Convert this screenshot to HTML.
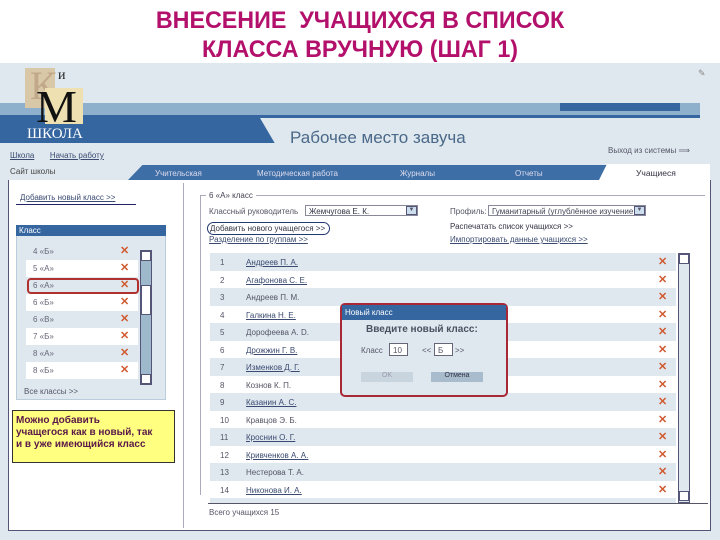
<!DOCTYPE html>
<html><head><meta charset="utf-8"><style>
*{margin:0;padding:0;box-sizing:border-box}
body{width:720px;height:540px;background:#fff;position:relative;overflow:hidden;font-family:"Liberation Sans",sans-serif;font-size:8px;color:#556}
.a{position:absolute}
.t{position:absolute;left:0;width:720px;text-align:center;font-family:"Liberation Sans Narrow","Liberation Sans",sans-serif;font-weight:bold;font-size:24px;color:#b3106c;transform:scaleX(0.97)}
u{color:#3a4a70}
.row{position:absolute;left:210px;width:466px;height:17.5px;font-size:8px;color:#556}
.row span{position:absolute;top:5px}
.x{color:#d05a30;font-size:11px;font-weight:bold}
.cr{position:absolute;left:26px;width:112px;height:17px;line-height:17px;color:#667;padding-left:7px}
.cr b{position:absolute;left:94px;top:0;color:#d05a30;font-size:11px}
</style></head><body>
<div class="t" style="top:7px">ВНЕСЕНИЕ&nbsp; УЧАЩИХСЯ В СПИСОК</div>
<div class="t" style="top:36px">КЛАССА ВРУЧНУЮ (ШАГ 1)</div>

<div class="a" style="left:0;top:63px;width:720px;height:477px;background:#dfe8ef"></div>
<div class="a" style="left:0;top:103px;width:700px;height:12px;background:#8fb0cc"></div>
<div class="a" style="left:0;top:115px;width:700px;height:28px;background:#3566a0"></div>
<div class="a" style="left:260px;top:118px;width:440px;height:30px;background:#dfe8ef;clip-path:polygon(0 0,100% 0,100% 100%,4% 100%)"></div>
<div class="a" style="left:560px;top:103px;width:120px;height:8px;background:#3566a0"></div>
<div class="a" style="left:25px;top:68px;width:30px;height:40px;background:#d8c8a8"></div>
<div class="a" style="left:30px;top:62px;font-family:'Liberation Serif',serif;font-size:40px;color:#c0a888">К</div>
<div class="a" style="left:58px;top:68px;font-family:'Liberation Serif',serif;font-size:14px;color:#222">и</div>
<div class="a" style="left:45px;top:88px;width:38px;height:36px;background:#eee0b0"></div>
<div class="a" style="left:36px;top:80px;font-family:'Liberation Serif',serif;font-size:46px;color:#111">М</div>
<div class="a" style="left:27px;top:126px;font-family:'Liberation Serif',serif;font-size:15px;color:#fff">ШКОЛА</div>
<div class="a" style="left:290px;top:128px;font-size:17px;color:#4a6888">Рабочее место завуча</div>
<div class="a" style="left:608px;top:146px;font-size:8px;color:#556">Выход из системы ⟹</div>
<div class="a" style="left:698px;top:68px;font-size:9px;color:#888">✎</div>
<div class="a" style="left:10px;top:151px"><u>Школа</u>&nbsp;&nbsp;&nbsp;&nbsp;&nbsp;&nbsp;&nbsp;<u>Начать работу</u></div>
<div class="a" style="left:10px;top:167px;color:#444">Сайт школы</div>
<div class="a" style="left:128px;top:165px;width:480px;height:15px;background:#3e6ea6;clip-path:polygon(3% 0,100% 0,100% 100%,0 100%)"></div>
<div class="a" style="left:155px;top:169px;color:#dde;width:450px"><span style="position:absolute;left:0">Учительская</span><span style="position:absolute;left:102px">Методическая работа</span><span style="position:absolute;left:245px">Журналы</span><span style="position:absolute;left:360px">Отчеты</span></div>
<div class="a" style="left:598px;top:164px;width:112px;height:18px;background:#fff;clip-path:polygon(8% 0,100% 0,100% 100%,0 100%)"></div>
<div class="a" style="left:636px;top:168px;font-size:8.5px;color:#334">Учащиеся</div>

<div class="a" style="left:8px;top:180px;width:703px;height:351px;background:#fff;border:1px solid #557;border-top:none"></div>
<div class="a" style="left:183px;top:183px;width:1px;height:345px;background:#aab"></div>
<div class="a" style="left:20px;top:193px"><u>Добавить новый класс &gt;&gt;</u></div>
<div class="a" style="left:16px;top:204px;width:120px;height:1px;background:#226"></div>
<div class="a" style="left:16px;top:225px;width:150px;height:175px;background:#dfe8ef;border:1px solid #bcd"></div>
<div class="a" style="left:16px;top:225px;width:150px;height:11px;background:#3566a0;color:#fff;padding:1px 3px">Класс</div>
<div class="cr" style="top:243px">4 «Б»<b>✕</b></div>
<div class="cr" style="top:260px;background:#fff">5 «А»<b>✕</b></div>
<div class="cr" style="top:277px">6 «А»<b>✕</b></div>
<div class="cr" style="top:294px;background:#fff">6 «Б»<b>✕</b></div>
<div class="cr" style="top:311px">6 «В»<b>✕</b></div>
<div class="cr" style="top:328px;background:#fff">7 «Б»<b>✕</b></div>
<div class="cr" style="top:345px">8 «А»<b>✕</b></div>
<div class="cr" style="top:362px;background:#fff">8 «Б»<b>✕</b></div>
<div class="a" style="left:27px;top:278px;width:112px;height:16px;border:2px solid #b03030;border-radius:4px"></div>
<div class="a" style="left:140px;top:250px;width:12px;height:135px;background:#9eb8cc;border:1px solid #557"></div>
<div class="a" style="left:141px;top:251px;width:10px;height:10px;background:#fff;border:1px solid #557"></div>
<div class="a" style="left:141px;top:285px;width:10px;height:30px;background:#fff;border:1px solid #557"></div>
<div class="a" style="left:141px;top:374px;width:10px;height:10px;background:#fff;border:1px solid #557"></div>
<div class="a" style="left:24px;top:387px;color:#556">Все классы &gt;&gt;</div>
<div class="a" style="left:12px;top:410px;width:163px;height:53px;background:#ffff80;border:1px solid #333;padding:4px 3px;font-weight:bold;font-size:10px;line-height:12px;color:#5a1848;white-space:nowrap">Можно добавить<br>учащегося как в новый, так<br>и в уже имеющийся класс</div>

<div class="a" style="left:200px;top:195px;width:505px;height:300px;border-top:1px solid #aab;border-left:1px solid #aab"></div>
<div class="a" style="left:206px;top:191px;background:#fff;padding:0 3px;color:#445">6 «А» класс</div>
<div class="a" style="left:209px;top:207px">Классный руководитель</div>
<div class="a" style="left:305px;top:205px;width:113px;height:11px;border:1px solid #889;padding:1px 3px;color:#334">Жемчугова Е. К.</div>
<div class="a" style="left:406px;top:206px;width:11px;height:9px;background:#cde;border:1px solid #557;font-size:6px;text-align:center">▼</div>
<div class="a" style="left:450px;top:207px">Профиль:</div>
<div class="a" style="left:488px;top:205px;width:158px;height:11px;border:1px solid #889;padding:1px 3px;color:#445;overflow:hidden;white-space:nowrap">Гуманитарный (углублённое изучение</div>
<div class="a" style="left:634px;top:206px;width:11px;height:9px;background:#cde;border:1px solid #557;font-size:6px;text-align:center">▼</div>
<div class="a" style="left:207px;top:222px;width:123px;height:13px;border:1.5px solid #223a70;border-radius:7px"></div>
<div class="a" style="left:210px;top:224px;color:#334">Добавить нового учащегося &gt;&gt;</div>
<div class="a" style="left:209px;top:235px"><u>Разделение по группам &gt;&gt;</u></div>
<div class="a" style="left:450px;top:222px;color:#334">Распечатать список учащихся &gt;&gt;</div>
<div class="a" style="left:450px;top:235px"><u>Импортировать данные учащихся &gt;&gt;</u></div>

<div class="row" style="top:253px;background:#dfe8ef"><span style="left:10px">1</span><span style="left:36px"><u>Андреев П. А.</u></span><span class="x" style="left:448px;top:2px">✕</span></div>
<div class="row" style="top:270.5px"><span style="left:10px">2</span><span style="left:36px"><u>Агафонова С. Е.</u></span><span class="x" style="left:448px;top:2px">✕</span></div>
<div class="row" style="top:288px;background:#dfe8ef"><span style="left:10px">3</span><span style="left:36px">Андреев П. М.</span><span class="x" style="left:448px;top:2px">✕</span></div>
<div class="row" style="top:305.5px"><span style="left:10px">4</span><span style="left:36px"><u>Галкина Н. Е.</u></span><span class="x" style="left:448px;top:2px">✕</span></div>
<div class="row" style="top:323px;background:#dfe8ef"><span style="left:10px">5</span><span style="left:36px">Дорофеева А. D.</span><span class="x" style="left:448px;top:2px">✕</span></div>
<div class="row" style="top:340.5px"><span style="left:10px">6</span><span style="left:36px"><u>Дрожжин Г. В.</u></span><span class="x" style="left:448px;top:2px">✕</span></div>
<div class="row" style="top:358px;background:#dfe8ef"><span style="left:10px">7</span><span style="left:36px"><u>Изменков Д. Г.</u></span><span class="x" style="left:448px;top:2px">✕</span></div>
<div class="row" style="top:375.5px"><span style="left:10px">8</span><span style="left:36px">Кознов К. П.</span><span class="x" style="left:448px;top:2px">✕</span></div>
<div class="row" style="top:393px;background:#dfe8ef"><span style="left:10px">9</span><span style="left:36px"><u>Казанин А. С.</u></span><span class="x" style="left:448px;top:2px">✕</span></div>
<div class="row" style="top:410.5px"><span style="left:10px">10</span><span style="left:36px">Кравцов Э. Б.</span><span class="x" style="left:448px;top:2px">✕</span></div>
<div class="row" style="top:428px;background:#dfe8ef"><span style="left:10px">11</span><span style="left:36px"><u>Кроснин О. Г.</u></span><span class="x" style="left:448px;top:2px">✕</span></div>
<div class="row" style="top:445.5px"><span style="left:10px">12</span><span style="left:36px"><u>Кривченков А. А.</u></span><span class="x" style="left:448px;top:2px">✕</span></div>
<div class="row" style="top:463px;background:#dfe8ef"><span style="left:10px">13</span><span style="left:36px">Нестерова Т. А.</span><span class="x" style="left:448px;top:2px">✕</span></div>
<div class="row" style="top:480.5px"><span style="left:10px">14</span><span style="left:36px"><u>Никонова И. А.</u></span><span class="x" style="left:448px;top:2px">✕</span></div>
<div class="row" style="top:498px;height:5px;background:#dfe8ef"></div>
<div class="a" style="left:208px;top:503px;width:500px;height:1px;background:#556"></div>
<div class="a" style="left:678px;top:253px;width:12px;height:250px;background:#dfe8ef;border:1px solid #557"></div>
<div class="a" style="left:679px;top:254px;width:10px;height:10px;background:#fff;border:1px solid #557"></div>
<div class="a" style="left:679px;top:491px;width:10px;height:10px;background:#fff;border:1px solid #557"></div>
<div class="a" style="left:209px;top:508px">Всего учащихся 15</div>

<div class="a" style="left:340px;top:303px;width:168px;height:94px;border:2px solid #a82838;border-radius:5px;background:#dfe8ef"></div>
<div class="a" style="left:342px;top:305px;width:164px;height:15px;background:#3566a0;color:#fff;padding:3px 3px">Новый класс</div>
<div class="a" style="left:366px;top:324px;font-size:10px;font-weight:bold;color:#4a5060">Введите новый класс:</div>
<div class="a" style="left:361px;top:346px">Класс</div>
<div class="a" style="left:389px;top:343px;width:19px;height:13px;background:#fff;border:1px solid #667;padding:2px 3px">10</div>
<div class="a" style="left:422px;top:346px">&lt;&lt;</div>
<div class="a" style="left:434px;top:343px;width:19px;height:13px;background:#fff;border:1px solid #667;padding:2px 3px">Б</div>
<div class="a" style="left:455px;top:346px">&gt;&gt;</div>
<div class="a" style="left:361px;top:372px;width:52px;height:10px;background:#c8d4de;color:#99a;text-align:center;font-size:7px">OK</div>
<div class="a" style="left:431px;top:372px;width:52px;height:10px;background:#a8bccd;color:#334;text-align:center;font-size:7px">Отмена</div>
</body></html>
